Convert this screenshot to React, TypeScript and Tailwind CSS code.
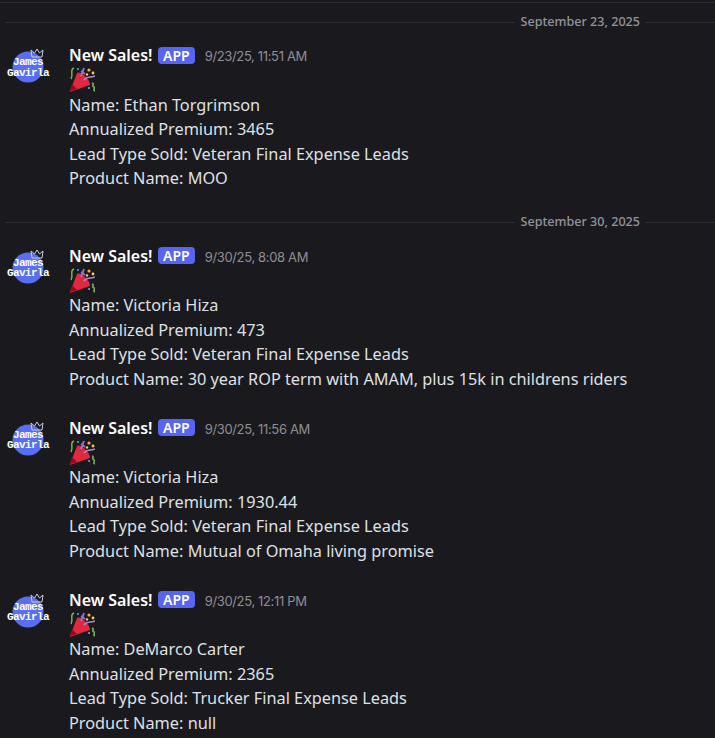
import React from 'react';

const FONT = '"Noto Sans", "Open Sans", sans-serif';

interface Sale {
  time: string;
  name: string;
  premium: string;
  lead: string;
  product: string;
}

function Avatar() {
  return (
    <div className="relative w-[40px] h-[40px] shrink-0">
      <svg className="absolute inset-0" width="40" height="40" viewBox="0 0 40 40">
        <circle cx="20" cy="20" r="15.5" fill="#5a6ff0" />
        <path d="M24 10 L23 3 L26.5 6 L29 2 L31.5 6 L35 3 L34 10 Z" fill="none" stroke="#c9cce2" strokeWidth="1" />
      </svg>
      <div className="absolute left-[-2px] top-[10px] w-[44px] flex flex-col items-center font-['Liberation_Mono',monospace] font-bold text-white text-[11px] leading-[10.5px] tracking-[-0.6px]">
        <span>James</span>
        <span>Gavirla</span>
      </div>
    </div>
  );
}

function Party() {
  return (
    <svg width="26" height="26" viewBox="0 0 26 26">
      <path d="M1 24 C0.5 24.5 1 25 2 24.5 L21 18 C22 14 12 3 8 6 Z" fill="#e0283f" />
      <path d="M1 24 L3 17 L8 22 Z" fill="#a0041e" />
      <path d="M5 1 C0 3 5 7 2 12" stroke="#77b255" strokeWidth="1.5" fill="none" />
      <path d="M12 9 L15 1 M16 7 L12 4" stroke="#8f75c9" strokeWidth="2" fill="none" />
      <path d="M15 13 C18 9 21 11 26 9" stroke="#aa8dd8" strokeWidth="1.5" fill="none" />
      <path d="M23 16 C26 17 22 19 25 20 C27 21 23 23 26 24" stroke="#77b255" strokeWidth="1.6" fill="none" />
      <circle cx="20" cy="3" r="1.6" fill="#fcab40" />
      <circle cx="24" cy="6" r="1.4" fill="#fdcb58" />
      <circle cx="18" cy="7.5" r="1.2" fill="#fdcb58" />
      <circle cx="9" cy="2" r="1" fill="#55acee" />
      <circle cx="20" cy="21" r="1.1" fill="#55acee" />
    </svg>
  );
}

function Message({ sale, gap }: { sale: Sale; gap: string }) {
  return (
    <div className={`flex pl-[8px] ${gap}`}>
      <div className="w-[61px] shrink-0 pt-[4px]">
        <Avatar />
      </div>
      <div className="flex-1 min-w-0">
        <div className="flex items-center h-[24px]">
          <span className="text-white font-semibold text-[16px]">New Sales!</span>
          <span className="ml-[5px] h-[17px] px-[5.5px] rounded-[4px] bg-[#5865f2] text-white font-semibold text-[14px] leading-[17px]">APP</span>
          <span className="ml-[9.5px] pt-[4px] font-['Inter',sans-serif] text-[#8e8e96] text-[13px] tracking-[-0.35px]">{sale.time}</span>
        </div>
        <div className="h-[25.8px]">
          <Party />
        </div>
        <div className="text-[#dfe0e4] text-[16.3px] leading-[24.5px]">
          <div>Name: {sale.name}</div>
          <div>Annualized Premium: {sale.premium}</div>
          <div>Lead Type Sold: {sale.lead}</div>
          <div>Product Name: {sale.product}</div>
        </div>
      </div>
    </div>
  );
}

function DateDivider({ label }: { label: string }) {
  return (
    <div className="flex items-center h-[20px] pl-[5px]">
      <div className="flex-1 h-px bg-[#2b2b31]" />
      <span className="px-[5px] text-[#93939b] text-[12.6px] font-medium">{label}</span>
      <div className="w-[70px] h-px bg-[#2b2b31]" />
    </div>
  );
}

export default function App() {
  return (
    <div className="w-[715px] h-[738px] overflow-hidden bg-[#1a1a1e]" style={{ fontFamily: FONT }}>
      <div className="h-[3px] border-b border-[#2b2b31]" />
      <div className="pt-[9px] pb-[11px]">
        <DateDivider label="September 23, 2025" />
      </div>
      <Message
        gap="pb-[21.4px]"
        sale={{ time: '9/23/25, 11:51 AM', name: 'Ethan Torgrimson', premium: '3465', lead: 'Veteran Final Expense Leads', product: 'MOO' }}
      />
      <div className="pb-[11.4px]">
        <DateDivider label="September 30, 2025" />
      </div>
      <Message
        gap="pb-[24.2px]"
        sale={{ time: '9/30/25, 8:08 AM', name: 'Victoria Hiza', premium: '473', lead: 'Veteran Final Expense Leads', product: '30 year ROP term with AMAM, plus 15k in childrens riders' }}
      />
      <Message
        gap="pb-[24.2px]"
        sale={{ time: '9/30/25, 11:56 AM', name: 'Victoria Hiza', premium: '1930.44', lead: 'Veteran Final Expense Leads', product: 'Mutual of Omaha living promise' }}
      />
      <Message
        gap="pb-[24.2px]"
        sale={{ time: '9/30/25, 12:11 PM', name: 'DeMarco Carter', premium: '2365', lead: 'Trucker Final Expense Leads', product: 'null' }}
      />
    </div>
  );
}
